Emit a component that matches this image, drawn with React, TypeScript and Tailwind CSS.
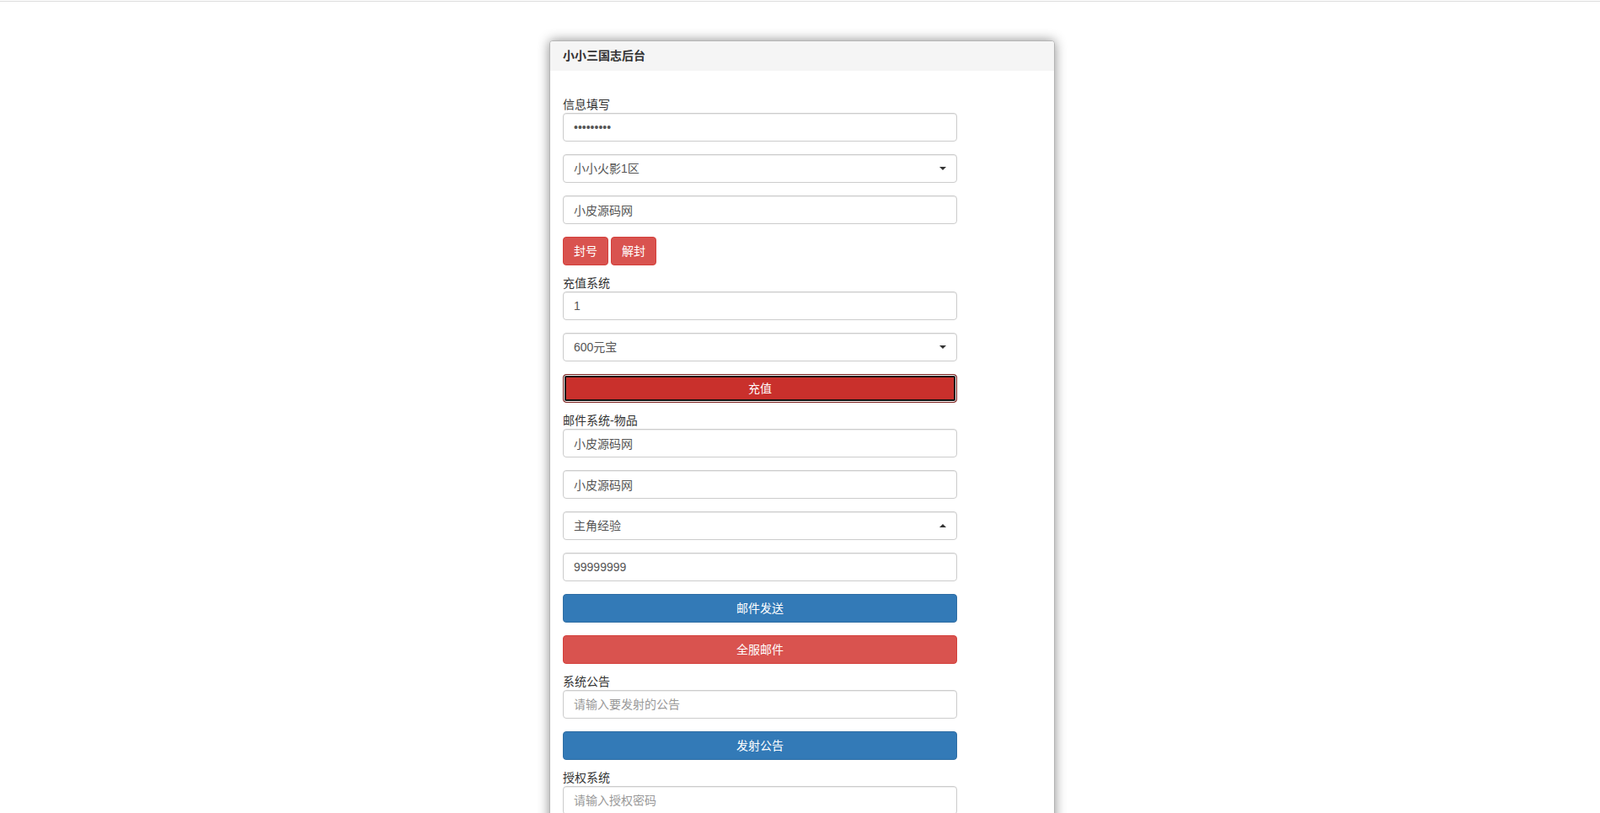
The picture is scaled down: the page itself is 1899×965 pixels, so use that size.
import type { ReactNode } from "react";

const font = "font-['Liberation_Sans','Noto_Sans_CJK_SC',sans-serif]";

const inputClass =
  "block h-[34px] w-[468px] rounded-[4px] border border-[#ccc] bg-white px-3 text-[14px] text-[#555] shadow-[inset_0_1px_1px_rgba(0,0,0,0.075)] outline-none placeholder:text-[#999]";

function Label({ children }: { children: ReactNode }) {
  return (
    <label className="-mt-1 block h-5 text-[14px] leading-5 text-[#333]">
      {children}
    </label>
  );
}

function Field({
  value,
  placeholder,
  type = "text",
}: {
  value?: string;
  placeholder?: string;
  type?: string;
}) {
  return (
    <div className="mb-[15px]">
      <input
        type={type}
        defaultValue={value}
        placeholder={placeholder}
        className={inputClass}
      />
    </div>
  );
}

function Select({ options, open = false }: { options: string[]; open?: boolean }) {
  return (
    <div className="relative mb-[15px] w-[468px]">
      <select
        defaultValue={options[0]}
        className={`${inputClass} appearance-none pr-8 text-[#333]`}
      >
        {options.map((o) => (
          <option key={o}>{o}</option>
        ))}
      </select>
      <svg
        className="pointer-events-none absolute right-[13px] top-[15px]"
        width="8"
        height="4"
        viewBox="0 0 8 4"
      >
        {open ? (
          <path d="M0 4 L4 0 L8 4 Z" fill="#333" />
        ) : (
          <path d="M0 0 L8 0 L4 4 Z" fill="#333" />
        )}
      </svg>
    </div>
  );
}

function WideButton({
  children,
  tone,
}: {
  children: ReactNode;
  tone: "primary" | "danger" | "focused";
}) {
  const tones = {
    primary: "border-[#2e6da4] bg-[#337ab7]",
    danger: "border-[#d43f3a] bg-[#d9534f]",
    focused:
      "border-[#761c19] bg-[#c9302c] shadow-[inset_0_0_0_1px_#fff,inset_0_0_0_3px_#111]",
  };
  return (
    <div className="mb-[15px]">
      <button
        type="button"
        className={`block h-[34px] w-[468px] rounded-[4px] border text-center text-[14px] leading-5 text-white ${tones[tone]}`}
      >
        {children}
      </button>
    </div>
  );
}

export default function App() {
  return (
    <div className={`min-h-screen bg-white ${font}`}>
      <div className="mt-px h-px bg-[#dcdcdc]" />
      <div className="flex justify-center pl-[5px] pt-[46px]">
        <div className="w-[600px] rounded-[4px] border border-[#b5b5b5] bg-white shadow-[0_0_14px_rgba(0,0,0,0.45)]">
          <div className="h-[35px] rounded-t-[3px] bg-[#f5f5f5] px-[15px] text-[14px] font-bold leading-[35px] text-[#333]">
            小小三国志后台
          </div>

          <div className="px-[15px] pb-[30px] pt-[34px]">
            <Label>信息填写</Label>
            <Field type="password" value="123456789" />
            <Select options={["小小火影1区", "小小火影2区"]} />
            <Field value="小皮源码网" />
            <div className="mb-[15px] flex gap-[3px]">
              <button
                type="button"
                className="h-[34px] rounded-[4px] border border-[#d43f3a] bg-[#d9534f] px-3 text-[14px] text-white"
              >
                封号
              </button>
              <button
                type="button"
                className="h-[34px] rounded-[4px] border border-[#d43f3a] bg-[#d9534f] px-3 text-[14px] text-white"
              >
                解封
              </button>
            </div>

            <Label>充值系统</Label>
            <Field value="1" />
            <Select options={["600元宝", "1200元宝", "6000元宝"]} />
            <WideButton tone="focused">充值</WideButton>

            <Label>邮件系统-物品</Label>
            <Field value="小皮源码网" />
            <Field value="小皮源码网" />
            <Select options={["主角经验", "元宝", "银两"]} open />
            <Field value="99999999" />
            <WideButton tone="primary">邮件发送</WideButton>
            <WideButton tone="danger">全服邮件</WideButton>

            <Label>系统公告</Label>
            <Field placeholder="请输入要发射的公告" />
            <WideButton tone="primary">发射公告</WideButton>

            <Label>授权系统</Label>
            <Field type="password" placeholder="请输入授权密码" />
            <WideButton tone="primary">授权</WideButton>
          </div>
        </div>
      </div>
    </div>
  );
}
